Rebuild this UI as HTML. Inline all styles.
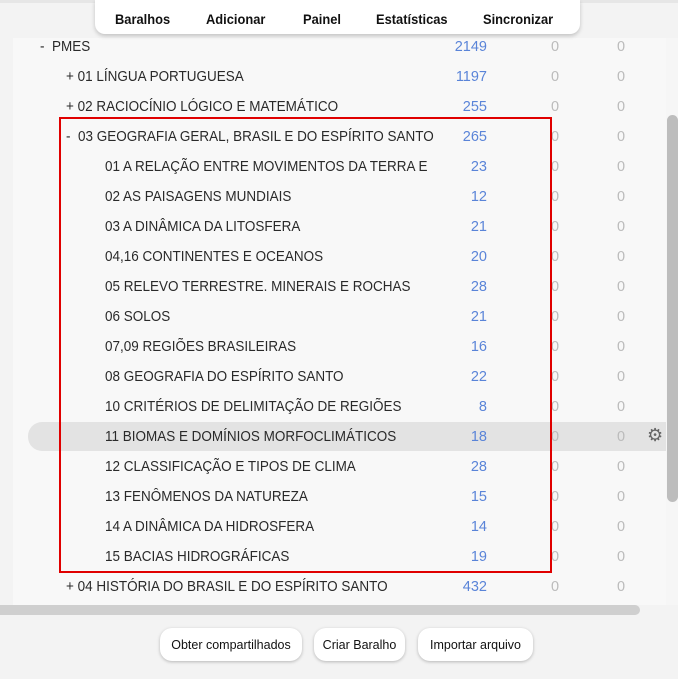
<!DOCTYPE html>
<html><head><meta charset="utf-8"><style>
html,body{margin:0;padding:0;width:678px;height:679px;overflow:hidden;background:#f3f3f3;font-family:"Liberation Sans",sans-serif;}
.top{position:absolute;left:0;top:0;width:678px;height:3px;background:#e6e6e6}
.area{position:absolute;left:13px;top:38px;width:653px;height:567px;background:#f8f8f8}
.leftstrip{position:absolute;left:0;top:38px;width:13px;height:567px;background:#f3f3f3;border-right:1px solid #e8e8e8}
.tb{position:absolute;left:95px;top:0;width:485px;height:34px;background:#fff;border-radius:0 0 10px 10px;box-shadow:0 2px 4px rgba(0,0,0,.2);z-index:3}
.tb span{position:absolute;top:11px;font-weight:bold;font-size:14px;color:#111;transform:scaleX(.92);transform-origin:left}
.row{position:absolute;left:0;width:678px;height:30px;font-size:14.5px;color:#2a2a2a}
.row .n{position:absolute;top:8px;white-space:nowrap;transform:scaleX(.93);transform-origin:left}
.row .c{position:absolute;top:8px;right:191px;color:#5a84d8;text-align:right}
.row .z1{position:absolute;top:8px;left:551px;color:#bbb}
.row .z2{position:absolute;top:8px;left:617px;color:#bbb}
.hl{position:absolute;left:28px;top:422px;width:638px;height:29px;background:#e3e3e3;border-radius:14px 0 0 14px}
.red{position:absolute;left:59px;top:117px;width:489px;height:452px;border:2px solid #e00000;z-index:2}
.vs{position:absolute;left:666px;top:38px;width:12px;height:567px;background:#f6f6f6}
.vt{position:absolute;left:667px;top:115px;width:11px;height:387px;background:#bdbdbd;border-radius:6px}
.hs{position:absolute;left:0;top:605px;width:640px;height:10px;background:#cfcfcf;border-radius:0 5px 5px 0}
.btn{position:absolute;top:628px;height:33px;background:#fff;border-radius:12px;box-shadow:0 1px 3px rgba(0,0,0,.25);font-size:12.5px;color:#111;text-align:center;line-height:34px}
</style></head><body>
<div class="top"></div>
<div class="leftstrip"></div>
<div class="area"></div>
<div class="vs"></div><div class="vt"></div>
<div class="hs"></div>
<div class="hl"></div>
<div class="tb">
<span style="left:20px">Baralhos</span><span style="left:111px">Adicionar</span><span style="left:208px">Painel</span><span style="left:281px">Estatísticas</span><span style="left:388px">Sincronizar</span>
</div>
<div class="row" style="top:31px"><span class="n" style="left:40px">-&nbsp; PMES</span><span class="c">2149</span><span class="z1">0</span><span class="z2">0</span></div>
<div class="row" style="top:61px"><span class="n" style="left:66px">+ 01 LÍNGUA PORTUGUESA</span><span class="c">1197</span><span class="z1">0</span><span class="z2">0</span></div>
<div class="row" style="top:91px"><span class="n" style="left:66px">+ 02 RACIOCÍNIO LÓGICO E MATEMÁTICO</span><span class="c">255</span><span class="z1">0</span><span class="z2">0</span></div>
<div class="row" style="top:121px"><span class="n" style="left:66px">-&nbsp; 03 GEOGRAFIA GERAL, BRASIL E DO ESPÍRITO SANTO</span><span class="c">265</span><span class="z1">0</span><span class="z2">0</span></div>
<div class="row" style="top:151px"><span class="n" style="left:105px">01 A RELAÇÃO ENTRE MOVIMENTOS DA TERRA E</span><span class="c">23</span><span class="z1">0</span><span class="z2">0</span></div>
<div class="row" style="top:181px"><span class="n" style="left:105px">02 AS PAISAGENS MUNDIAIS</span><span class="c">12</span><span class="z1">0</span><span class="z2">0</span></div>
<div class="row" style="top:211px"><span class="n" style="left:105px">03 A DINÂMICA DA LITOSFERA</span><span class="c">21</span><span class="z1">0</span><span class="z2">0</span></div>
<div class="row" style="top:241px"><span class="n" style="left:105px">04,16 CONTINENTES E OCEANOS</span><span class="c">20</span><span class="z1">0</span><span class="z2">0</span></div>
<div class="row" style="top:271px"><span class="n" style="left:105px">05 RELEVO TERRESTRE. MINERAIS E ROCHAS</span><span class="c">28</span><span class="z1">0</span><span class="z2">0</span></div>
<div class="row" style="top:301px"><span class="n" style="left:105px">06 SOLOS</span><span class="c">21</span><span class="z1">0</span><span class="z2">0</span></div>
<div class="row" style="top:331px"><span class="n" style="left:105px">07,09 REGIÕES BRASILEIRAS</span><span class="c">16</span><span class="z1">0</span><span class="z2">0</span></div>
<div class="row" style="top:361px"><span class="n" style="left:105px">08 GEOGRAFIA DO ESPÍRITO SANTO</span><span class="c">22</span><span class="z1">0</span><span class="z2">0</span></div>
<div class="row" style="top:391px"><span class="n" style="left:105px">10 CRITÉRIOS DE DELIMITAÇÃO DE REGIÕES</span><span class="c">8</span><span class="z1">0</span><span class="z2">0</span></div>
<div class="row" style="top:421px"><span class="n" style="left:105px">11 BIOMAS E DOMÍNIOS MORFOCLIMÁTICOS</span><span class="c">18</span><span class="z1">0</span><span class="z2">0</span><span style="position:absolute;left:647px;top:4px;font-size:18px;color:#666">⚙</span></div>
<div class="row" style="top:451px"><span class="n" style="left:105px">12 CLASSIFICAÇÃO E TIPOS DE CLIMA</span><span class="c">28</span><span class="z1">0</span><span class="z2">0</span></div>
<div class="row" style="top:481px"><span class="n" style="left:105px">13 FENÔMENOS DA NATUREZA</span><span class="c">15</span><span class="z1">0</span><span class="z2">0</span></div>
<div class="row" style="top:511px"><span class="n" style="left:105px">14 A DINÂMICA DA HIDROSFERA</span><span class="c">14</span><span class="z1">0</span><span class="z2">0</span></div>
<div class="row" style="top:541px"><span class="n" style="left:105px">15 BACIAS HIDROGRÁFICAS</span><span class="c">19</span><span class="z1">0</span><span class="z2">0</span></div>
<div class="row" style="top:571px"><span class="n" style="left:66px">+ 04 HISTÓRIA DO BRASIL E DO ESPÍRITO SANTO</span><span class="c">432</span><span class="z1">0</span><span class="z2">0</span></div>
<div class="red"></div>
<div class="btn" style="left:160px;width:142px">Obter compartilhados</div>
<div class="btn" style="left:314px;width:91px">Criar Baralho</div>
<div class="btn" style="left:418px;width:115px">Importar arquivo</div>
</body></html>
